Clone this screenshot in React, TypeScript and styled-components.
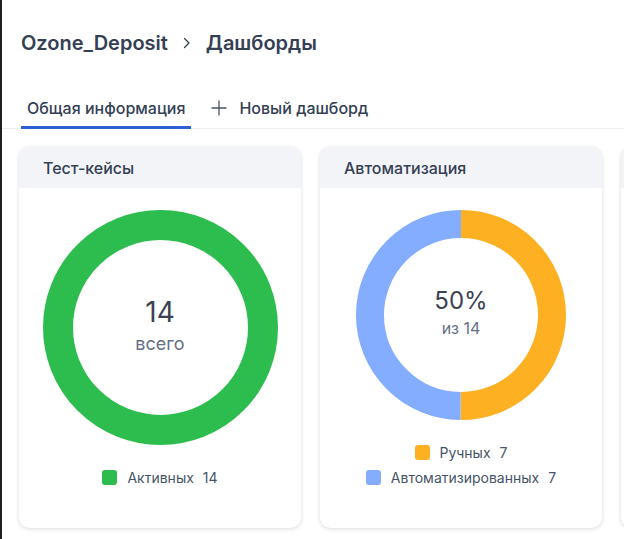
import React from 'react';
import styled, { createGlobalStyle } from 'styled-components';

const GlobalStyle = createGlobalStyle`
  html, body {
    margin: 0;
    padding: 0;
    background: #ffffff;
  }
  body {
    font-family: Inter, 'Noto Sans', sans-serif;
    color: #344054;
  }
`;

const Page = styled.div`
  width: 624px;
  height: 539px;
  box-sizing: border-box;
  border-left: 2px solid #1f2022;
  overflow: hidden;
  background: #ffffff;
`;

const Header = styled.div`
  padding: 28px 0 0 19px;
`;

const Breadcrumbs = styled.div`
  display: flex;
  align-items: center;
  gap: 13px;
  font-size: 20px;
  font-weight: 600;
  line-height: 30px;
  color: #344054;
`;

const Tabs = styled.div`
  display: flex;
  align-items: flex-end;
  gap: 14px;
  margin-top: 40px;
  padding-left: 19px;
  border-bottom: 1px solid #eaecf0;
`;

const Tab = styled.div<{ $active?: boolean }>`
  display: flex;
  align-items: center;
  gap: 12px;
  padding: 0 6px 8px;
  font-size: 16px;
  font-weight: 500;
  line-height: 20px;
  color: #344054;
  border-bottom: 3px solid ${(p) => (p.$active ? '#2d5fd7' : 'transparent')};
  margin-bottom: -1px;
`;

const Cards = styled.div`
  display: flex;
  gap: 19px;
  padding: 18px 0 0 17px;
`;

const Card = styled.div`
  flex: 0 0 282px;
  height: 381px;
  display: flex;
  flex-direction: column;
  background: #ffffff;
  border-radius: 10px;
  box-shadow: 0 1px 4px rgba(16, 24, 40, 0.14), 0 0 1px rgba(16, 24, 40, 0.1);
  overflow: hidden;
`;

const CardHeader = styled.div`
  height: 41px;
  flex: 0 0 41px;
  display: flex;
  align-items: center;
  padding-left: 24px;
  background: #f2f4f7;
  font-size: 16px;
  font-weight: 500;
  color: #344054;
`;

const CardBody = styled.div`
  flex: 1;
  display: flex;
  flex-direction: column;
  padding-bottom: 41px;
`;

const ChartArea = styled.div`
  flex: 1;
  display: flex;
  align-items: center;
  justify-content: center;
`;

const Donut = styled.div<{ $size: number }>`
  position: relative;
  width: ${(p) => p.$size}px;
  height: ${(p) => p.$size}px;
`;

const DonutCenter = styled.div`
  position: absolute;
  inset: 0;
  display: flex;
  flex-direction: column;
  align-items: center;
  justify-content: center;
  padding-bottom: 4px;
  box-sizing: border-box;
`;

const BigValue = styled.div<{ $size: number }>`
  font-size: ${(p) => p.$size}px;
  line-height: 1.2;
  font-weight: 400;
  color: #3b4352;
`;

const SubValue = styled.div<{ $size: number }>`
  font-size: ${(p) => p.$size}px;
  line-height: 1.3;
  color: #667085;
  margin-top: 2px;
`;

const Legend = styled.div`
  display: flex;
  flex-direction: column;
  align-items: center;
  gap: 5px;
`;

const LegendItem = styled.div`
  display: flex;
  align-items: center;
  height: 20px;
  font-size: 14px;
  color: #475467;
`;

const Swatch = styled.span<{ $color: string }>`
  width: 15px;
  height: 15px;
  border-radius: 3px;
  background: ${(p) => p.$color};
  margin-right: 10px;
`;

const Count = styled.span`
  margin-left: 9px;
`;

type Segment = { value: number; color: string };

const Ring: React.FC<{ size: number; thickness: number; segments: Segment[] }> = ({
  size,
  thickness,
  segments,
}) => {
  const r = (size - thickness) / 2;
  const c = 2 * Math.PI * r;
  const total = segments.reduce((s, x) => s + x.value, 0);
  let offset = 0;
  return (
    <svg width={size} height={size} viewBox={`0 0 ${size} ${size}`}>
      <g transform={`rotate(-90 ${size / 2} ${size / 2})`}>
        {segments.map((seg, i) => {
          const len = (seg.value / total) * c;
          const el = (
            <circle
              key={i}
              cx={size / 2}
              cy={size / 2}
              r={r}
              fill="none"
              stroke={seg.color}
              strokeWidth={thickness}
              strokeDasharray={`${len} ${c - len}`}
              strokeDashoffset={-offset}
            />
          );
          offset += len;
          return el;
        })}
      </g>
    </svg>
  );
};

const Chevron = () => (
  <svg width="12" height="16" viewBox="0 0 12 16" fill="none">
    <path d="M3.5 3.5L8 8L3.5 12.5" stroke="#344054" strokeWidth="1.3" strokeLinecap="round" strokeLinejoin="round" />
  </svg>
);

const Plus = () => (
  <svg width="16" height="16" viewBox="0 0 16 16" fill="none">
    <path d="M8 1V15M1 8H15" stroke="#475467" strokeWidth="1.3" strokeLinecap="round" />
  </svg>
);

const App: React.FC = () => {
  return (
    <Page>
      <GlobalStyle />
      <Header>
        <Breadcrumbs>
          <span>Ozone_Deposit</span>
          <Chevron />
          <span>Дашборды</span>
        </Breadcrumbs>
      </Header>
      <Tabs>
        <Tab $active>Общая информация</Tab>
        <Tab>
          <Plus />
          Новый дашборд
        </Tab>
      </Tabs>
      <Cards>
        <Card>
          <CardHeader>Тест-кейсы</CardHeader>
          <CardBody>
            <ChartArea>
              <Donut $size={235}>
                <Ring size={235} thickness={30} segments={[{ value: 14, color: '#2dbd4f' }]} />
                <DonutCenter>
                  <BigValue $size={28}>14</BigValue>
                  <SubValue $size={18}>всего</SubValue>
                </DonutCenter>
              </Donut>
            </ChartArea>
            <Legend>
              <LegendItem>
                <Swatch $color="#2dbd4f" />
                Активных
                <Count>14</Count>
              </LegendItem>
            </Legend>
          </CardBody>
        </Card>
        <Card>
          <CardHeader>Автоматизация</CardHeader>
          <CardBody>
            <ChartArea>
              <Donut $size={210}>
                <Ring
                  size={210}
                  thickness={28}
                  segments={[
                    { value: 7, color: '#fdb022' },
                    { value: 7, color: '#84adff' },
                  ]}
                />
                <DonutCenter>
                  <BigValue $size={24}>50%</BigValue>
                  <SubValue $size={16}>из 14</SubValue>
                </DonutCenter>
              </Donut>
            </ChartArea>
            <Legend>
              <LegendItem>
                <Swatch $color="#fdb022" />
                Ручных
                <Count>7</Count>
              </LegendItem>
              <LegendItem>
                <Swatch $color="#84adff" />
                Автоматизированных
                <Count>7</Count>
              </LegendItem>
            </Legend>
          </CardBody>
        </Card>
        <Card>
          <CardHeader />
          <CardBody />
        </Card>
      </Cards>
    </Page>
  );
};

export default App;
